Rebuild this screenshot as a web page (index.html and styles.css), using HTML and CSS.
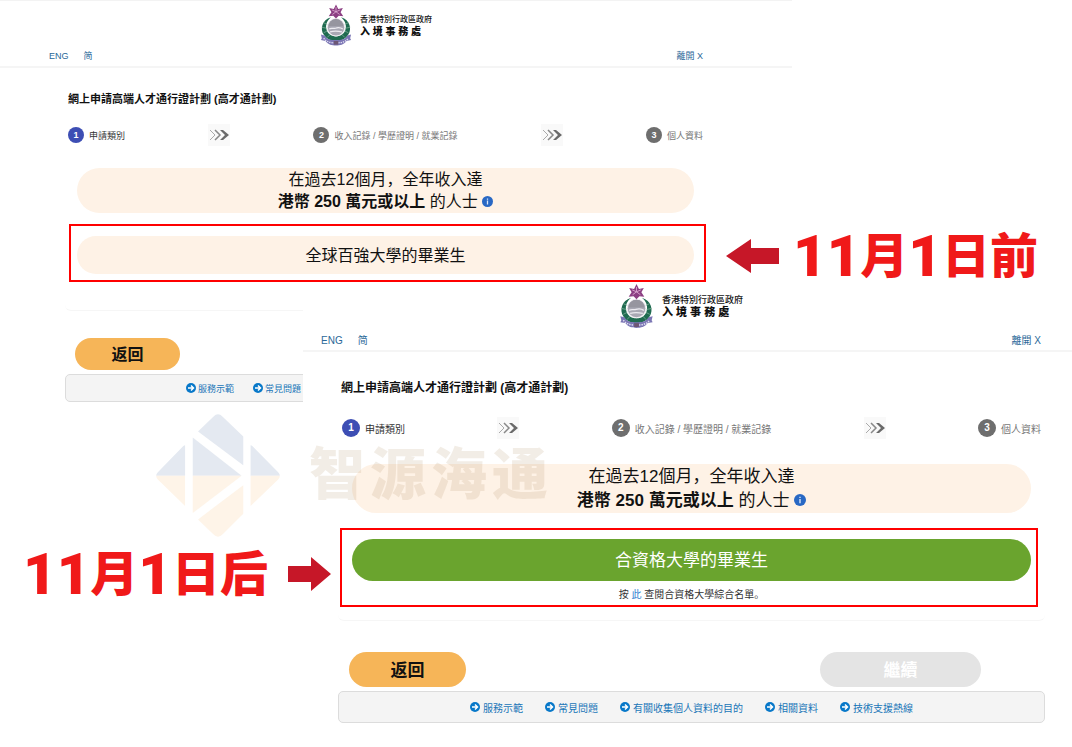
FILE: index.html
```html
<!DOCTYPE html>
<html lang="zh-CN">
<head>
<meta charset="utf-8">
<meta name="viewport" content="width=device-width, initial-scale=1">
<title>網上申請高端人才通行證計劃</title>
<link rel="stylesheet" href="styles.css">
</head>
<body>
<svg width="0" height="0" class="defs" aria-hidden="true">
  <symbol id="emblem" viewBox="0 0 35 45">
    <path d="M12 14C2 17 0 27 4 33c3 5 8 7 13.500 7s10.500-2 13.500-7c4-6 2-16-8-19 5 4 6 9 5 13-1 5-5 8-10.500 8S8 32 7 27c-1-4 0-9 5-13z" fill="#1f6b50"/>
    <path d="M4 20l4 2M2 25l5 1M4 31l4-2M8 36l3-3M31 20l-4 2M33 25l-5 1M31 31l-4-2M27 36l-3-3" stroke="#7fae98" stroke-width=".8"/>
    <circle cx="17.500" cy="25" r="9.500" fill="#a9a8b4" stroke="#f1eff3" stroke-width="1"/>
    <path d="M9.500 24a8 8 0 0 1 16 0z" fill="#96959f"/>
    <path d="M10 27c3-2 4 0 7-1s5-1 8 1M11 30c4-1 8-1 13 0" stroke="#eceaf0" stroke-width="1.300" fill="none"/>
    <path d="M1 33l4 1c3 5 7 5 12.500 5s9.500 0 12.500-5l4-1-1 4 1 2-5 1c-3 4-7 5-11.500 5S9 44 6 40l-5-1 1-2z" fill="#7b76b4"/>
    <path d="M4 37c3 4 7 5 13.500 5S28 41 31 37" stroke="#dfdcf0" stroke-width="1.500" stroke-dasharray="1.500 1" fill="none"/>
    <path d="M15 40h5v4h-5z" fill="#6d5674"/>
    <path d="M17.500 0l2.500 5 5-1-2.500 4.500 3 4.500-5-.5-3 3-3-3-5 .5 3-4.500L10 4l5 1z" fill="#8c3f83"/>
    <path d="M17.500 8V3M17.500 8l4.500-2M17.500 8l4 3M17.500 8l-4 3M17.500 8L13 6" stroke="#dcaad2" stroke-width=".9"/>
  </symbol>
  <symbol id="chevrons" viewBox="0 0 22 22">
    <path d="M0 0h22v22H0z" fill="#f9f9f9"/>
    <path d="M2 6l5 5-5 5" stroke="#aaa" stroke-width="1" fill="none"/>
    <path d="M7 6l5 5-5 5" stroke="#888" stroke-width="1.500" fill="none"/>
    <path d="M12 6h3l6 5-6 5h-3l5-5z" fill="#6a6a6a"/>
  </symbol>
  <symbol id="go" viewBox="0 0 10 10">
    <circle cx="5" cy="5" r="5" fill="#0878c9"/>
    <path d="M2 5h5M5 2.500L7.500 5 5 7.500" stroke="#fff" stroke-width="1.500" fill="none"/>
  </symbol>
  <symbol id="info" viewBox="0 0 12 12">
    <circle cx="6" cy="6" r="6" fill="#2868c4"/>
    <path d="M5.300 2.700h1.400V4H5.300zM5.300 5h1.400v4.300H5.300z" fill="#d9e6f8"/>
  </symbol>
</svg>

<main class="collage">
  <section class="screen screen-before">
    <header class="top">
      <div class="brand">
        <svg class="emblem" aria-hidden="true"><use href="#emblem"/></svg>
        <div class="brand-name"><span>香港特別行政區政府</span><strong>入 境 事 務 處</strong></div>
      </div>
      <nav class="nav"><a href="#">ENG</a><a href="#">简</a><a href="#" class="leave">離開 X</a></nav>
    </header>
    <div class="body">
      <div class="card">
        <h1 class="title">網上申請高端人才通行證計劃 (高才通計劃)</h1>
        <ol class="steps">
          <li class="step current"><span class="num">1</span>申請類別</li>
          <li class="sep"><svg class="chevrons" aria-hidden="true"><use href="#chevrons"/></svg></li>
          <li class="step"><span class="num">2</span>收入記錄 / 學歷證明 / 就業記錄</li>
          <li class="sep"><svg class="chevrons" aria-hidden="true"><use href="#chevrons"/></svg></li>
          <li class="step"><span class="num">3</span>個人資料</li>
        </ol>
        <button type="button" class="option income">在過去12個月，全年收入達<br><b>港幣 250 萬元或以上</b> 的人士 <svg class="info" aria-hidden="true"><use href="#info"/></svg></button>
        <div class="marked">
          <button type="button" class="option graduate">全球百強大學的畢業生</button>
        </div>
      </div>
      <div class="actions"><button type="button" class="action back">返回</button></div>
      <footer class="links">
        <a href="#"><svg class="go" aria-hidden="true"><use href="#go"/></svg>服務示範</a>
        <a href="#"><svg class="go" aria-hidden="true"><use href="#go"/></svg>常見問題</a>
      </footer>
    </div>
  </section>

  <section class="screen screen-after">
    <header class="top">
      <div class="brand">
        <svg class="emblem" aria-hidden="true"><use href="#emblem"/></svg>
        <div class="brand-name"><span>香港特別行政區政府</span><strong>入 境 事 務 處</strong></div>
      </div>
      <nav class="nav"><a href="#">ENG</a><a href="#">简</a><a href="#" class="leave">離開 X</a></nav>
    </header>
    <div class="body">
      <div class="card">
        <h1 class="title">網上申請高端人才通行證計劃 (高才通計劃)</h1>
        <ol class="steps">
          <li class="step current"><span class="num">1</span>申請類別</li>
          <li class="sep"><svg class="chevrons" aria-hidden="true"><use href="#chevrons"/></svg></li>
          <li class="step"><span class="num">2</span>收入記錄 / 學歷證明 / 就業記錄</li>
          <li class="sep"><svg class="chevrons" aria-hidden="true"><use href="#chevrons"/></svg></li>
          <li class="step"><span class="num">3</span>個人資料</li>
        </ol>
        <button type="button" class="option income">在過去12個月，全年收入達<br><b>港幣 250 萬元或以上</b> 的人士 <svg class="info" aria-hidden="true"><use href="#info"/></svg></button>
        <div class="marked">
          <button type="button" class="option graduate selected">合資格大學的畢業生</button>
          <p class="hint">按 <a href="#">此</a> 查閱合資格大學綜合名單。</p>
        </div>
      </div>
      <div class="actions">
        <button type="button" class="action back">返回</button>
        <button type="button" class="action next" disabled>繼續</button>
      </div>
      <footer class="links">
        <a href="#"><svg class="go" aria-hidden="true"><use href="#go"/></svg>服務示範</a>
        <a href="#"><svg class="go" aria-hidden="true"><use href="#go"/></svg>常見問題</a>
        <a href="#"><svg class="go" aria-hidden="true"><use href="#go"/></svg>有關收集個人資料的目的</a>
        <a href="#"><svg class="go" aria-hidden="true"><use href="#go"/></svg>相關資料</a>
        <a href="#"><svg class="go" aria-hidden="true"><use href="#go"/></svg>技術支援熱線</a>
      </footer>
    </div>
  </section>

  <div class="callout callout-before">
    <svg class="arrow arrow-left" viewBox="0 0 53 34" aria-hidden="true"><path d="M0 17L25 0v9h28v16H25v9z"/></svg>
    <p class="date"><span class="digits">11</span>月<span class="digits">1</span>日前</p>
  </div>
  <div class="callout callout-after">
    <p class="date"><span class="digits">11</span>月<span class="digits">1</span>日后</p>
    <svg class="arrow arrow-right" viewBox="0 0 43 34" aria-hidden="true"><path d="M43 17L23 0v9H0v16h23v9z"/></svg>
  </div>

  <div class="watermark">
    <svg class="diamond" viewBox="0 0 372 370" aria-hidden="true">
      <g fill="#e4e9f1">
        <path d="M126 53L172 8q14-15 28 0l62 60v86z"/>
        <path d="M110 71l147 115H110z"/>
        <path d="M87 94v92H0q0-6 5-11l76-78q3-3 6-3z"/>
        <path d="M284 94v92h88q0-6-5-11l-77-78q-3-3-6-3z"/>
      </g>
      <g fill="#fef4e8">
        <path d="M126 317l136-103v86l-62 62q-14 15-28 0z"/>
        <path d="M110 186h147L110 298z"/>
        <path d="M87 277v-91H0q0 6 5 11z"/>
        <path d="M284 277v-91h88q0 6-5 11z"/>
      </g>
    </svg>
    <div class="wordmark"><span>智</span><span>源</span><span>海</span><span>通</span></div>
  </div>
</main>
</body>
</html>
```
FILE: styles.css
```css
* {
  box-sizing: border-box;
}

body {
  margin: 0;
  background: #fff;
  color: #111;
  font-family: "Liberation Sans", "Noto Sans CJK SC", sans-serif;
}

a {
  color: #2a6898;
  text-decoration: none;
}

button {
  border: 0;
  padding: 0;
  font-family: inherit;
}

.defs {
  position: absolute;
}

/* Two screens overlap in a shared grid. */
.collage {
  position: relative;
  display: grid;
  grid-template-columns: 303fr 489fr 280fr;
  grid-template-rows: 284px auto;
  min-height: 100vh;
}

.screen-before {
  --small: 9px;
  --title: 11px;
  --large: 16px;
  --badge: 16px;
  --brand: 8px;
  --dept: 10px;
  grid-area: 1 / 1 / 3 / 3;
  border-top: 1px solid #f3f3f3;
}

.screen-after {
  --small: 10px;
  --title: 12px;
  --large: 17px;
  --badge: 18px;
  --brand: 9px;
  --dept: 11px;
  grid-area: 2 / 2 / 3 / 4;
  background: #fff;
}

.top {
  border-bottom: 2px solid #f5f5f5;
}

.screen-before .top {
  padding: 3px 89px 3px 49px;
}

.screen-after .top {
  padding: 0 31px 2px 18px;
}

.brand {
  display: flex;
  justify-content: center;
  gap: 8px;
}

.emblem {
  width: 32px;
  height: 42px;
}

.screen-after .emblem {
  width: 35px;
  height: 44px;
}

.brand-name {
  display: flex;
  flex-direction: column;
  padding-top: 10px;
  font-size: var(--brand);
  font-weight: 500;
  line-height: 12px;
}

.brand-name strong {
  font-size: var(--dept);
  font-weight: 900;
}

.nav {
  display: flex;
  align-items: center;
  gap: 15px;
  padding-top: 3px;
  font-size: var(--small);
  line-height: 14px;
}

.screen-after .nav {
  padding-top: 6px;
}

.leave {
  margin-left: auto;
}

.screen-before .body {
  padding: 23px 86px 0 65px;
}

.screen-after .body {
  padding: 28px 27px 24px 35px;
}

.card {
  border-bottom: 1px solid #f6f6f6;
  border-radius: 6px;
}

.screen-before .card {
  padding-bottom: 28px;
}

.screen-after .card {
  padding-bottom: 13px;
}

.title {
  margin: 0;
  padding: 0 3px;
  font-size: var(--title);
  line-height: 16px;
}

.steps {
  display: flex;
  justify-content: space-between;
  align-items: center;
  margin: 0;
  padding: 17px 3px 22px;
  list-style: none;
  font-size: var(--small);
}

.screen-after .steps {
  padding: 21px 4px 25px;
}

.step {
  display: flex;
  align-items: center;
  gap: 5px;
  color: #777;
}

.current {
  color: #333;
}

.num {
  width: var(--badge);
  border-radius: 50%;
  background: #6e6e6e;
  color: #fff;
  font-weight: bold;
  line-height: var(--badge);
  text-align: center;
}

.current .num {
  background: #3d4eb4;
}

.sep,
.chevrons {
  display: block;
  width: 22px;
  height: 22px;
}

.option {
  display: block;
  border-radius: 25px;
  background: #fef2e6;
  color: #111;
  font-size: var(--large);
}

.income {
  width: calc(100% - 24px);
  margin: 0 12px;
  line-height: 22px;
  min-height: 45px;
}

.screen-after .income {
  width: calc(100% - 28px);
  margin: 0 14px;
  line-height: 24px;
  min-height: 49px;
}

.info {
  width: 11px;
  height: 11px;
}

.screen-after .info {
  width: 12px;
  height: 12px;
}

.marked {
  border: 2px solid #f00;
}

.screen-before .marked {
  margin: 11px 0 0 4px;
  padding: 10px 10px 6px 6px;
}

.screen-after .marked {
  margin: 15px 7px 0 2px;
  padding: 9px 5px 1px 10px;
}

.graduate {
  width: 100%;
  min-height: 38px;
  padding-bottom: 3px;
}

.selected {
  min-height: 42px;
  background: #6aa42e;
  color: #fff;
}

.hint {
  margin: 5px 0 0;
  color: #333;
  font-size: var(--small);
  line-height: 18px;
  text-align: center;
}

.hint a {
  color: #2f7fd0;
}

.actions {
  display: flex;
  justify-content: space-between;
  padding: 27px 64px 4px 10px;
}

.screen-after .actions {
  padding: 31px 64px 4px 11px;
}

.action {
  min-height: 32px;
  padding-bottom: 2px;
  border-radius: 18px;
  font-size: var(--large);
  font-weight: bold;
}

.screen-after .action {
  min-height: 35px;
}

.back {
  width: 105px;
  background: #f6b558;
  color: #111;
}

.screen-after .back {
  width: 117px;
}

.next {
  width: 161px;
  background: #e4e4e4;
  color: #fff;
}

.links {
  display: flex;
  align-items: center;
  gap: 19px;
  min-height: 28px;
  padding-left: 120px;
  border: 1px solid #dcdcdc;
  border-radius: 5px;
  background: #f4f4f4;
  font-size: var(--small);
}

.screen-after .links {
  justify-content: center;
  gap: 22px;
  min-height: 32px;
  padding-left: 0;
}

.links a {
  display: flex;
  align-items: center;
  gap: 2px;
  color: #1a76b8;
}

.screen-after .links a {
  gap: 3px;
}

.go {
  width: 10px;
  height: 10px;
}

.callout {
  z-index: 2;
  display: flex;
  align-items: center;
}

.callout-before {
  grid-area: 1 / 2 / 2 / 4;
  place-self: end;
  gap: 14px;
  margin: 0 34px -8px 0;
}

.callout-after {
  grid-area: 2 / 1 / 3 / 2;
  place-self: start end;
  gap: 20px;
  margin: 254px -28px 0 0;
}

.arrow {
  fill: #c61728;
}

.arrow-left {
  width: 53px;
  height: 34px;
}

.arrow-right {
  width: 43px;
  height: 34px;
}

.date {
  display: flex;
  align-items: center;
  margin: 0;
  padding-bottom: 8px;
  color: #f01919;
  font-family: "Noto Sans CJK SC", sans-serif;
  font-size: 48px;
  font-weight: 900;
  line-height: 56px;
  white-space: nowrap;
}

.digits {
  padding-top: 8px;
  font-family: Roboto, sans-serif;
  font-size: 58px;
}

.watermark {
  position: absolute;
  z-index: 1;
  top: 414px;
  left: 156px;
  display: flex;
  align-items: center;
  gap: 29px;
  pointer-events: none;
}

.diamond {
  width: 124px;
  height: 123px;
}

.wordmark {
  display: flex;
  gap: 5px;
  padding-bottom: 12px;
  color: rgba(160, 125, 80, 0.14);
  font-family: "Noto Sans CJK SC", sans-serif;
  font-size: 56px;
  font-weight: 900;
  line-height: 56px;
}
```
